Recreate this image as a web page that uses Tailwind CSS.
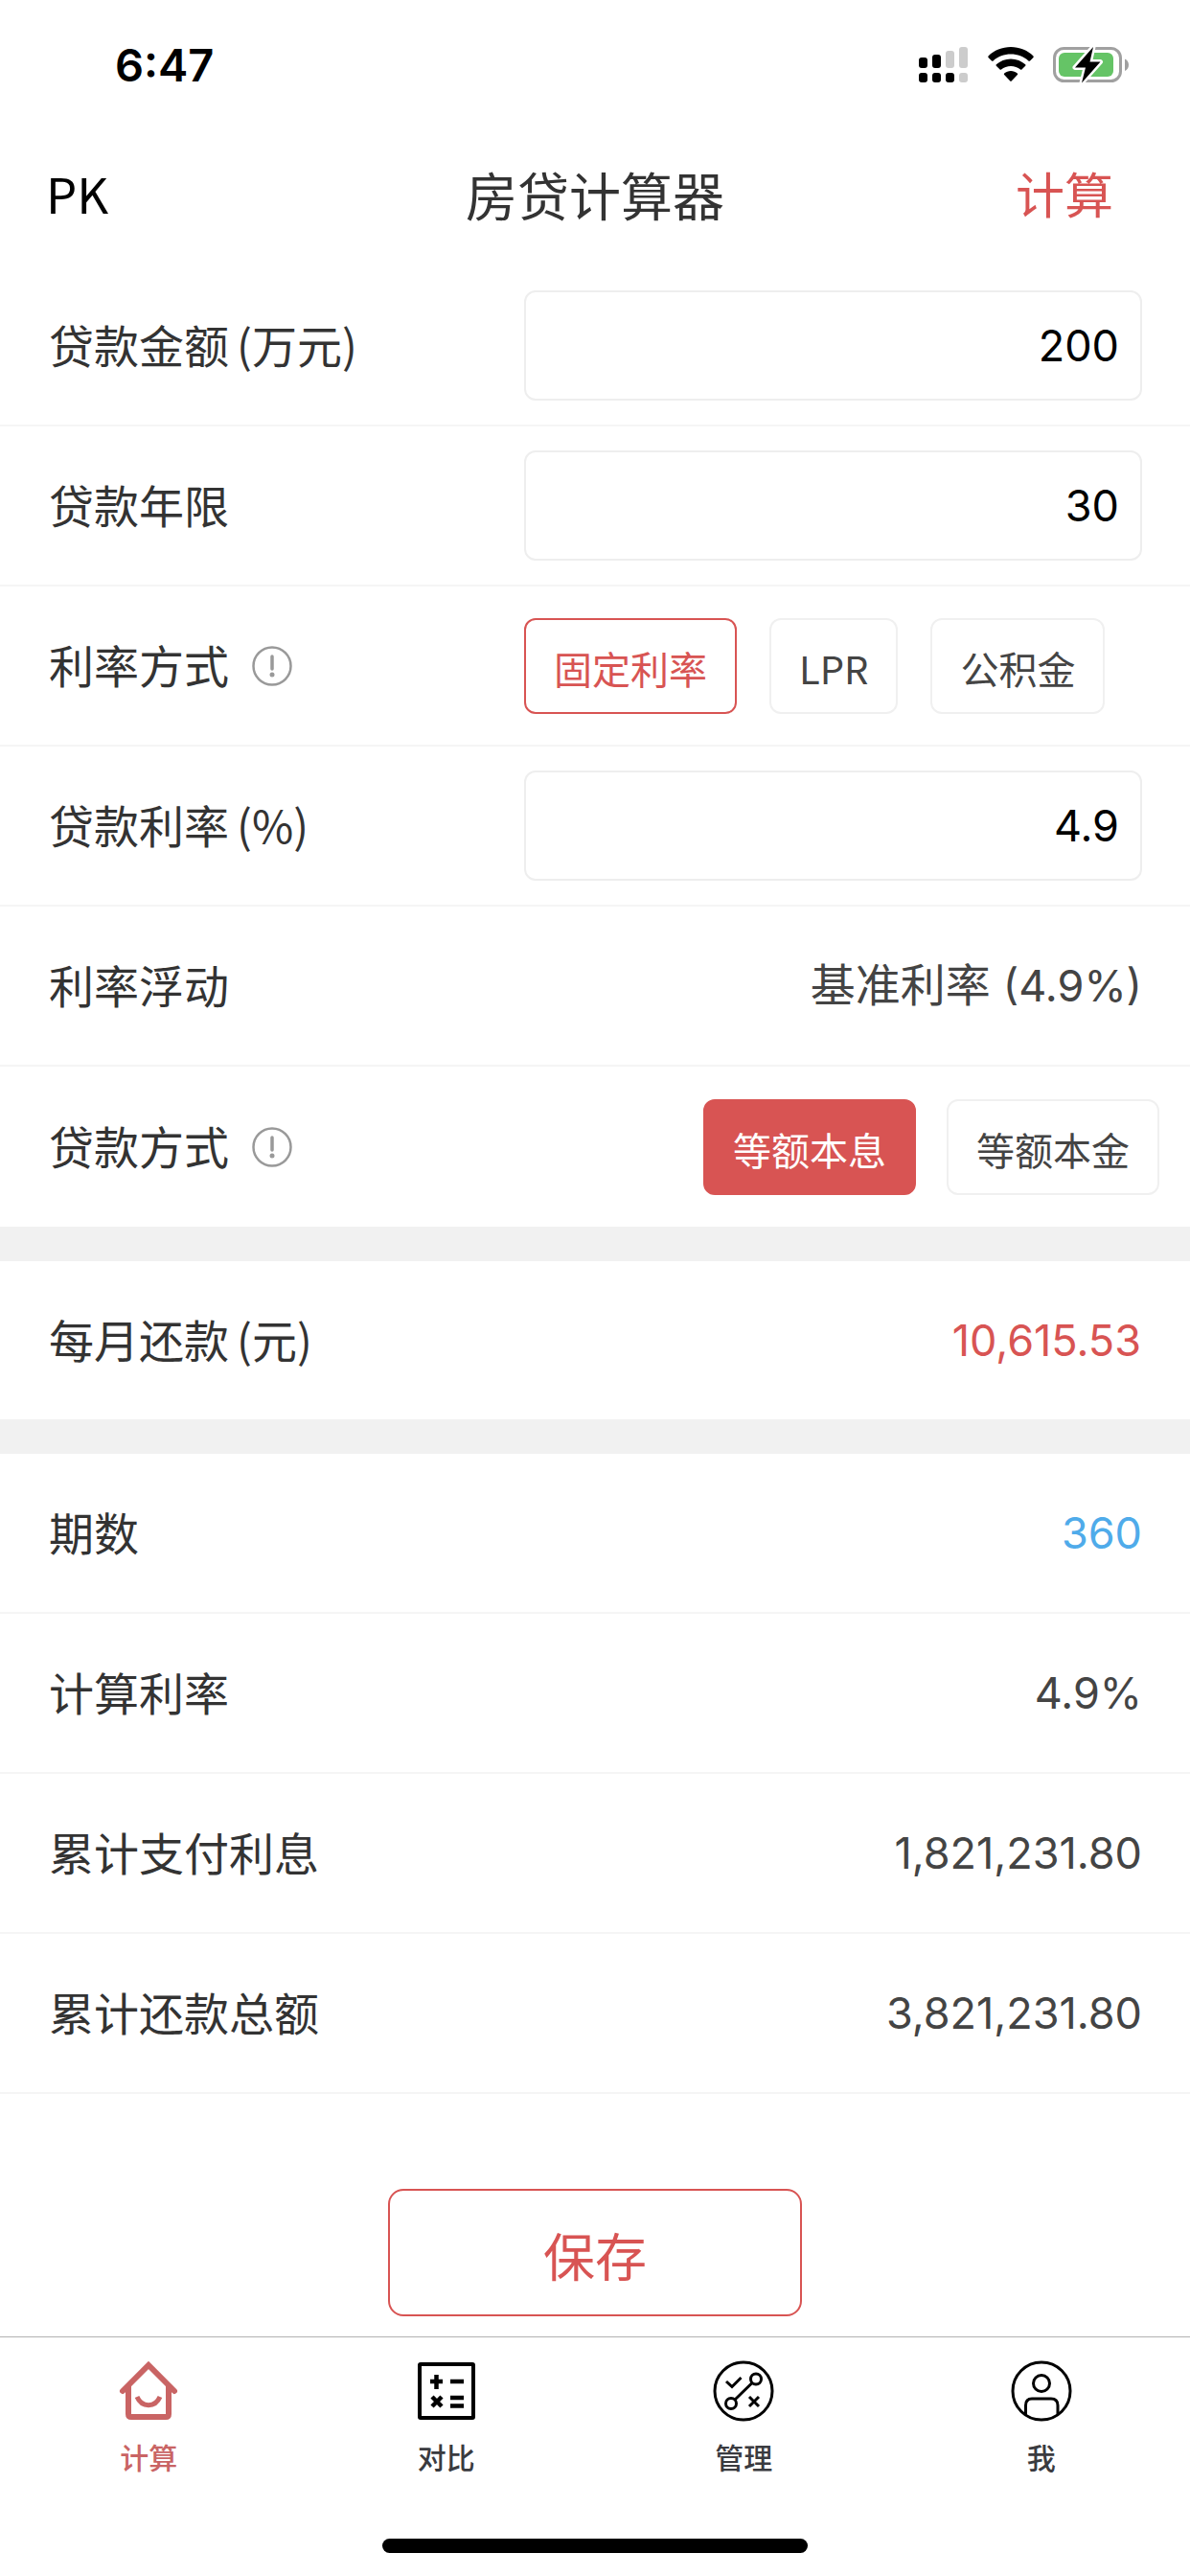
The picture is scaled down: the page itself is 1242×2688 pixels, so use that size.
<!DOCTYPE html>
<html lang="zh-CN">
<head>
<meta charset="UTF-8">
<meta name="viewport" content="width=device-width, initial-scale=1.0">
<title>房贷计算器</title>
<script src="https://cdn.jsdelivr.net/npm/@tailwindcss/browser@4"></script>
</head>
<body class="min-h-screen flex flex-col bg-white text-[#333] text-[47px] leading-[60px] font-['Noto_Sans_CJK_SC',sans-serif]">
    <!-- Status bar -->
    <div class="h-[132px] pl-[120px] pr-[63px] flex items-center justify-between text-black">
        <span class="pt-1 text-[47px] font-semibold font-['Inter',sans-serif]">6:47</span>
        <div class="flex items-center gap-5 pt-1">
            <svg class="w-[52px] h-[38px]" viewBox="0 0 52 38">
                <rect x="0" y="11" width="9" height="11" rx="3"/>
                <rect x="14" y="8" width="9" height="14" rx="3"/>
                <rect x="28" y="4" width="9" height="18" rx="3" fill="#ccc"/>
                <rect x="42" y="0" width="9" height="22" rx="3" fill="#ccc"/>
                <rect x="0" y="27" width="9" height="10" rx="3"/>
                <rect x="14" y="27" width="9" height="10" rx="3"/>
                <rect x="28" y="27" width="9" height="10" rx="3"/>
                <rect x="42" y="27" width="9" height="10" rx="3" fill="#ccc"/>
            </svg>
            <svg class="w-[48px] h-[38px]" viewBox="0 0 48 38">
                <path d="M24 0C33 0 41.500 3.500 47.500 9.500Q48 10.200 47.500 10.900L44 14.500Q43.200 15.200 42.400 14.500C37.500 10 31 7.600 24 7.600S10.500 10 5.600 14.500Q4.800 15.200 4 14.500L.5 10.900Q0 10.200.5 9.500C6.500 3.500 15 0 24 0Z"/>
                <path d="M24 12.400C29.800 12.400 35.200 14.600 39.200 18.300Q39.900 19 39.200 19.700L35.400 23.500Q34.700 24.100 34 23.500C31.200 21.100 27.800 19.900 24 19.900S16.800 21.100 14 23.500Q13.300 24.100 12.600 23.500L8.800 19.700Q8.100 19 8.800 18.300C12.800 14.600 18.200 12.400 24 12.400Z"/>
                <path d="M24 25C26.500 25 28.900 25.900 30.800 27.400Q31.600 28.200 30.900 28.900L24.700 35.600Q24 36.300 23.300 35.600L17.100 28.900Q16.400 28.200 17.200 27.400C19.100 25.900 21.500 25 24 25Z"/>
            </svg>
            <svg class="w-[80px] h-[38px]" viewBox="0 0 80 38">
                <rect x="1.500" y="1.500" width="69" height="34" rx="10" fill="none" stroke="#a0a0a0" stroke-width="3"/>
                <path d="M75 12.500C77.500 13.500 79 16 79 18.700S77.500 24 75 25Z" fill="#a0a0a0"/>
                <rect x="6" y="6" width="57" height="25" rx="6" fill="#65c466"/>
                <path d="M42 0L23 21.500H34L30 37.500L49.500 15.500H38.500Z" stroke="#fff" stroke-width="5" paint-order="stroke" stroke-linejoin="round"/>
            </svg>
        </div>
    </div>

    <!-- Header -->
    <header class="h-[146px] pl-12 pr-20 pb-1 grid grid-cols-3 items-center">
        <button class="justify-self-start pb-1 text-[51px] text-black">PK</button>
        <h1 class="justify-self-center whitespace-nowrap pl-8 text-[54px]">房贷计算器</h1>
        <button class="justify-self-end pb-1 text-[51px] text-[#d85453]">计算</button>
    </header>

    <main class="flex-1 flex flex-col">
        <!-- Loan form -->
        <form>
            <div class="h-[167px] pl-[51px] pr-[50px] flex items-center justify-between border-b-2 border-[#f5f5f5]">
                <label for="amount" class="pb-1">贷款金额<span class="ml-2">(万元)</span></label>
                <input type="text" id="amount" value="200" class="w-[645px] h-[115px] px-[22px] border-2 border-[#eee] rounded-xl text-right text-[45px] text-black font-['Inter',sans-serif]">
            </div>
            <div class="h-[167px] pl-[51px] pr-[50px] flex items-center justify-between border-b-2 border-[#f5f5f5]">
                <label for="years" class="pb-1">贷款年限</label>
                <input type="text" id="years" value="30" class="w-[645px] h-[115px] px-[22px] border-2 border-[#eee] rounded-xl text-right text-[45px] text-black font-['Inter',sans-serif]">
            </div>
            <div class="h-[167px] pl-[51px] pr-[50px] flex items-center justify-between border-b-2 border-[#f5f5f5]">
                <div class="flex items-center gap-6">
                    <span class="pb-1">利率方式</span>
                    <button type="button" aria-label="利率方式说明">
                        <svg class="w-[42px] h-[42px]" viewBox="0 0 42 42" fill="none" stroke="#999">
                            <circle cx="21" cy="21" r="19.500" stroke-width="2.500"/>
                            <path d="M21 11V24" stroke-width="3.500" stroke-linecap="round"/>
                            <circle cx="21" cy="30" r="2.500" fill="#999" stroke="none"/>
                        </svg>
                    </button>
                </div>
                <div class="w-[645px] flex gap-[34px] text-[40px]">
                    <button type="button" class="h-[100px] px-[29px] pt-1 border-2 border-[#d85453] rounded-xl text-[#d85453]">固定利率</button>
                    <button type="button" class="h-[100px] px-[29px] pt-1 border-2 border-[#f0f0f0] rounded-xl text-[#444]">LPR</button>
                    <button type="button" class="h-[100px] px-[29px] pt-1 border-2 border-[#f0f0f0] rounded-xl text-[#444]">公积金</button>
                </div>
            </div>
            <div class="h-[167px] pl-[51px] pr-[50px] flex items-center justify-between border-b-2 border-[#f5f5f5]">
                <label for="rate" class="pb-1">贷款利率<span class="ml-2">(%)</span></label>
                <input type="text" id="rate" value="4.9" class="w-[645px] h-[115px] px-[22px] border-2 border-[#eee] rounded-xl text-right text-[45px] text-black font-['Inter',sans-serif]">
            </div>
            <div class="h-[167px] pl-[51px] pr-[50px] flex items-center justify-between border-b-2 border-[#f5f5f5]">
                <span class="pb-1">利率浮动</span>
                <button type="button" class="text-[#444] font-['Inter','Noto_Sans_CJK_SC',sans-serif]">基准利率 <span class="text-[45px]">(4.9%)</span></button>
            </div>
            <div class="h-[167px] pl-[51px] pr-8 flex items-center justify-between">
                <div class="flex items-center gap-6">
                    <span class="pb-1">贷款方式</span>
                    <button type="button" aria-label="贷款方式说明">
                        <svg class="w-[42px] h-[42px]" viewBox="0 0 42 42" fill="none" stroke="#999">
                            <circle cx="21" cy="21" r="19.500" stroke-width="2.500"/>
                            <path d="M21 11V24" stroke-width="3.500" stroke-linecap="round"/>
                            <circle cx="21" cy="30" r="2.500" fill="#999" stroke="none"/>
                        </svg>
                    </button>
                </div>
                <div class="flex gap-8 text-[40px]">
                    <button type="button" class="h-[100px] px-[29px] pt-1 border-2 border-[#d85453] rounded-xl bg-[#d85453] text-white">等额本息</button>
                    <button type="button" class="h-[100px] px-[29px] pt-1 border-2 border-[#f0f0f0] rounded-xl text-[#444]">等额本金</button>
                </div>
            </div>
        </form>

        <!-- Monthly payment -->
        <div class="h-[237px] px-[51px] flex items-center justify-between border-y-[36px] border-[#f1f1f1]">
            <span class="pb-1">每月还款<span class="ml-2">(元)</span></span>
            <span class="text-[45px] text-[#d85453] font-['Inter',sans-serif]">10,615.53</span>
        </div>

        <!-- Totals -->
        <dl>
            <div class="h-[167px] pl-[51px] pr-[50px] flex items-center justify-between border-b-2 border-[#f5f5f5]">
                <dt class="pb-1">期数</dt>
                <dd class="text-[45px] text-[#4fabea] font-['Inter',sans-serif]">360</dd>
            </div>
            <div class="h-[167px] pl-[51px] pr-[50px] flex items-center justify-between border-b-2 border-[#f5f5f5]">
                <dt class="pb-1">计算利率</dt>
                <dd class="text-[45px] text-[#444] font-['Inter',sans-serif]">4.9%</dd>
            </div>
            <div class="h-[167px] pl-[51px] pr-[50px] flex items-center justify-between border-b-2 border-[#f5f5f5]">
                <dt class="pb-1">累计支付利息</dt>
                <dd class="text-[45px] text-[#444] font-['Inter',sans-serif]">1,821,231.80</dd>
            </div>
            <div class="h-[167px] pl-[51px] pr-[50px] flex items-center justify-between border-b-2 border-[#f5f5f5]">
                <dt class="pb-1">累计还款总额</dt>
                <dd class="text-[45px] text-[#444] font-['Inter',sans-serif]">3,821,231.80</dd>
            </div>
        </dl>

        <button class="mt-auto mb-[21px] self-center w-[432px] h-[133px] pt-1 border-2 border-[#d85453] rounded-2xl text-[54px] text-[#d85453]">保存</button>
    </main>

    <!-- Tab bar -->
    <nav class="h-[250px] pt-6 pb-6 flex flex-col justify-between items-center border-t border-[#b2b2b2]">
        <div class="w-full grid grid-cols-4 text-[30px] leading-[40px] font-medium text-[#3a3b40]">
            <a href="#" class="flex flex-col items-center gap-4 text-[#c96464]">
                <svg class="w-16 h-16" viewBox="0 0 64 64" fill="none" stroke="currentColor" stroke-width="6">
                    <path d="M5 32L32 5L59 32" stroke-linecap="round"/>
                    <path d="M11 27V56Q11 59 14 59H50Q53 59 53 56V27"/>
                    <path d="M20 38C25 49.500 39 49.500 44 38" stroke-width="5"/>
                </svg>
                <span>计算</span>
            </a>
            <a href="#" class="flex flex-col items-center gap-4">
                <svg class="w-16 h-16" viewBox="0 0 64 64" fill="none" stroke="#000" stroke-width="4">
                    <rect x="4" y="4" width="56" height="56" rx="1"/>
                    <path d="M15 22H28M21.500 15V30M36 22H50M36 39H50M36 47.500H50M17 38L27 48M27 38L17 48" stroke-width="4.500"/>
                </svg>
                <span>对比</span>
            </a>
            <a href="#" class="flex flex-col items-center gap-4">
                <svg class="w-16 h-16" viewBox="0 0 64 64" fill="none" stroke="#000" stroke-width="3">
                    <circle cx="32" cy="32" r="30"/>
                    <circle cx="45" cy="19.500" r="5.500"/>
                    <circle cx="19" cy="45" r="5.500"/>
                    <path d="M41 23.500L23 41M14 22L20 27.500L29.500 18M38 38L48 48M48 38L38 48"/>
                </svg>
                <span>管理</span>
            </a>
            <a href="#" class="flex flex-col items-center gap-4">
                <svg class="w-16 h-16" viewBox="0 0 64 64" fill="none" stroke="#000" stroke-width="3">
                    <circle cx="32" cy="32" r="30"/>
                    <circle cx="32" cy="24" r="8.500"/>
                    <path d="M15.500 57V47Q15.500 40 22 40H42Q49 40 49 47V57"/>
                </svg>
                <span>我</span>
            </a>
        </div>
        <!-- Home indicator -->
        <div class="w-[444px] h-[15px] rounded-full bg-black"></div>
    </nav>
</body>
</html>
